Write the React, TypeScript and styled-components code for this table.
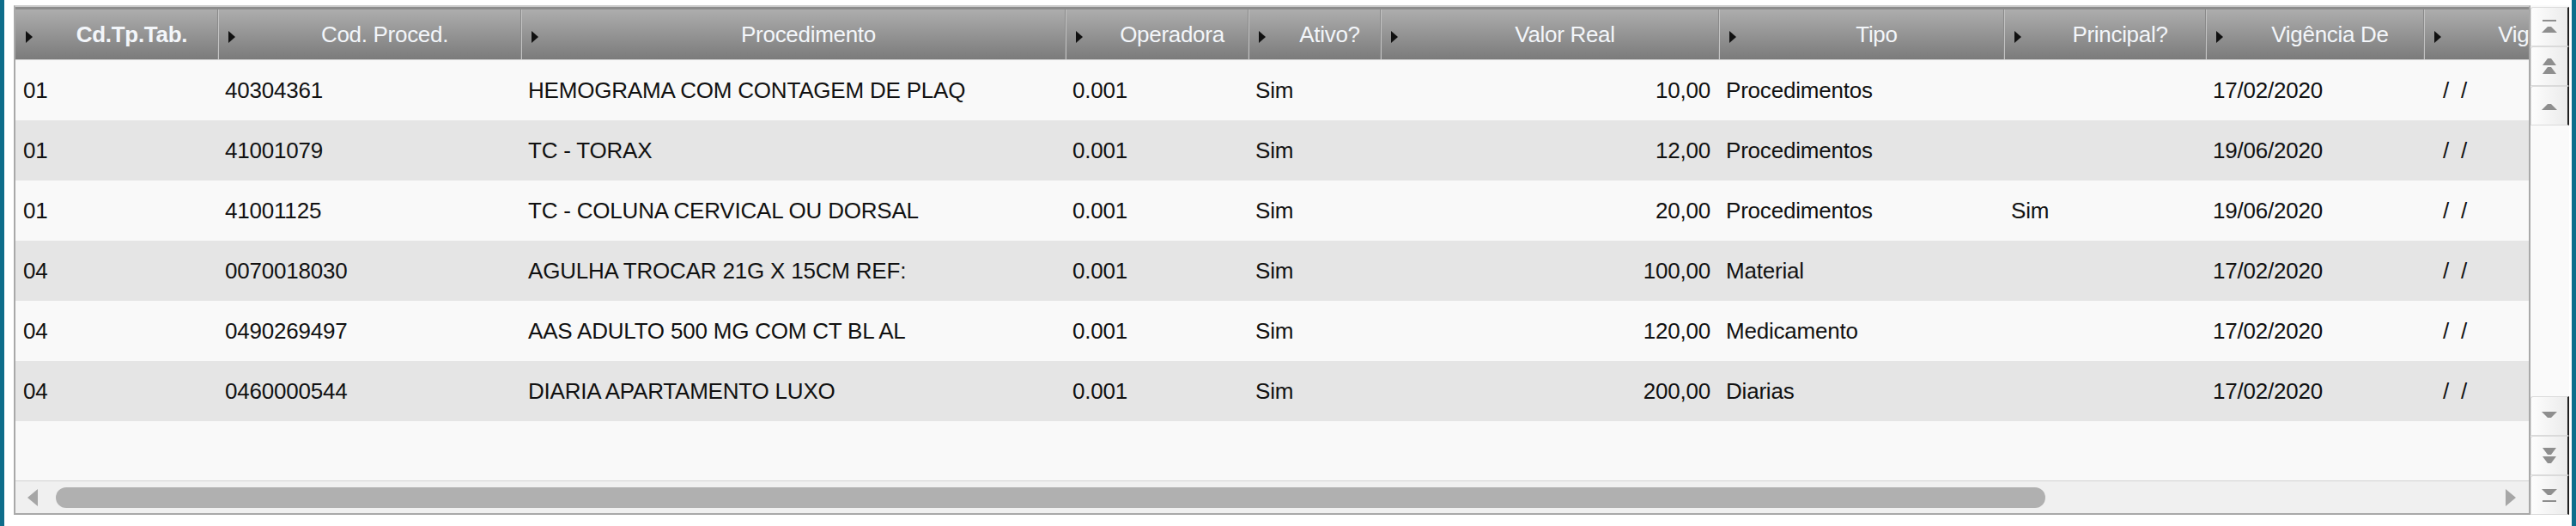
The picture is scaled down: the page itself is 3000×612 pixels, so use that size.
import React from 'react';
import styled, { createGlobalStyle } from 'styled-components';

const TEAL = '#0f6e8b';
const ARROW_GRAY = '#8e8e8e';

const GlobalStyle = createGlobalStyle`
  html, body {
    margin: 0;
    padding: 0;
    background: #ffffff;
  }
  body {
    font-family: 'Liberation Sans', Arial, sans-serif;
  }
`;

const Page = styled.div`
  box-sizing: border-box;
  width: 3000px;
  height: 612px;
  display: flex;
  align-items: flex-start;
  padding: 6px 3px 0 11px;
  border-left: 5px solid ${TEAL};
  border-right: 5px solid ${TEAL};
  background: #ffffff;
`;

const GridFrame = styled.div`
  box-sizing: border-box;
  flex: 1;
  min-width: 0;
  height: 593px;
  display: flex;
  flex-direction: column;
  overflow: hidden;
  border-top: 2px solid #cfcfcf;
  border-left: 2px solid #a9a9a9;
  border-right: 2px solid #a9a9a9;
  border-bottom: 2px solid #a9a9a9;
  background: #f9f9f9;
`;

const HeaderRow = styled.div`
  display: flex;
  flex: none;
  height: 58px;
  border-top: 3px solid #8c8c8c;
  border-bottom: 1px solid #d4d4d4;
  background: linear-gradient(#adadad, #7b7b7b);
`;

const HeaderCell = styled.div<{ $width: number; $first?: boolean }>`
  box-sizing: border-box;
  flex: none;
  width: ${(p) => p.$width}px;
  display: flex;
  align-items: center;
  padding-left: 12px;
  border-left: ${(p) => (p.$first ? 'none' : '1px solid #8a8a8a')};
  box-shadow: ${(p) => (p.$first ? 'none' : 'inset 1px 0 0 #c3c3c3')};
`;

const SortArrow = styled.span`
  flex: none;
  width: 0;
  height: 0;
  margin-top: 5px;
  border-left: 8px solid #111111;
  border-top: 7px solid transparent;
  border-bottom: 7px solid transparent;
`;

const HeaderLabel = styled.span<{ $bold?: boolean }>`
  flex: 1;
  padding-left: 16px;
  text-align: center;
  white-space: nowrap;
  color: #f3f6fa;
  font-size: 26px;
  font-weight: ${(p) => (p.$bold ? 700 : 400)};
  letter-spacing: -0.3px;
`;

const DataRow = styled.div<{ $alt: boolean }>`
  display: flex;
  flex: none;
  height: 70px;
  background: ${(p) => (p.$alt ? '#e5e5e5' : '#f9f9f9')};
`;

const Cell = styled.div<{ $width: number; $align?: 'left' | 'right' }>`
  box-sizing: border-box;
  flex: none;
  width: ${(p) => p.$width}px;
  display: flex;
  align-items: center;
  justify-content: ${(p) => (p.$align === 'right' ? 'flex-end' : 'flex-start')};
  padding: 0 9px;
  white-space: pre;
  color: #111111;
  font-size: 26px;
  letter-spacing: -0.2px;
`;

const EmptySpace = styled.div`
  flex: 1;
  background: #f9f9f9;
`;

const HScroll = styled.div`
  flex: none;
  height: 37px;
  display: flex;
  align-items: center;
  padding: 0 15px 0 14px;
  border-top: 1px solid #d2d2d2;
  background: #f0f0f0;
`;

const HThumb = styled.div`
  flex: none;
  width: 2317px;
  height: 24px;
  margin-left: 21px;
  border-radius: 12px;
  background: #b0b0b0;
`;

const HSpacer = styled.div`
  flex: 1;
`;

const VScroll = styled.div`
  box-sizing: border-box;
  flex: none;
  width: 45px;
  height: 593px;
  display: flex;
  flex-direction: column;
  padding-top: 2px;
  background: #fafafa;
`;

const ButtonGroup = styled.div`
  display: flex;
  flex-direction: column;
`;

const VSpacer = styled.div`
  flex: 1;
`;

const ScrollButton = styled.div`
  box-sizing: border-box;
  height: 46px;
  display: flex;
  align-items: center;
  justify-content: center;
  border: 1px solid #dadada;
  border-right: 2px solid #1f1f1f;
  border-radius: 3px 0 0 0;
  background: linear-gradient(90deg, #fdfdfd, #ebebeb);
`;

type Glyph = 'first' | 'pageUp' | 'up' | 'down' | 'pageDown' | 'last';

const upTri = (y: number, h: number, w = 18) =>
  `${10 - w / 2},${y + h} ${10 + w / 2},${y + h} 12,${y + 1} 8,${y + 1}`;

function ScrollGlyph({ kind }: { kind: Glyph }) {
  const flip = kind === 'down' || kind === 'pageDown' || kind === 'last';
  const base = flip ? ({ first: 'first', pageUp: 'pageUp', up: 'up', down: 'up', pageDown: 'pageUp', last: 'first' } as const)[kind] : kind;
  return (
    <svg width="20" height="30" viewBox="0 0 20 30" style={flip ? { transform: 'scaleY(-1)' } : undefined}>
      {base === 'first' && (
        <>
          <rect x="2" y="7" width="16" height="2" fill={ARROW_GRAY} />
          <polygon points={upTri(14, 8)} fill={ARROW_GRAY} />
        </>
      )}
      {base === 'pageUp' && (
        <>
          <polygon points={upTri(5, 9, 16)} fill={ARROW_GRAY} />
          <polygon points={upTri(15, 9, 16)} fill={ARROW_GRAY} />
        </>
      )}
      {base === 'up' && <polygon points={upTri(12, 8)} fill={ARROW_GRAY} />}
    </svg>
  );
}

function SideArrow({ dir }: { dir: 'left' | 'right' }) {
  return (
    <svg width="12" height="20" viewBox="0 0 12 20">
      <polygon points={dir === 'left' ? '12,0 12,20 0,10' : '0,0 0,20 12,10'} fill="#a6a6a6" />
    </svg>
  );
}

type Column = {
  title: string;
  width: number;
  bold?: boolean;
  align?: 'left' | 'right';
};

const COLUMNS: Column[] = [
  { title: 'Cd.Tp.Tab.', width: 235, bold: true },
  { title: 'Cod. Proced.', width: 353 },
  { title: 'Procedimento', width: 634 },
  { title: 'Operadora', width: 213 },
  { title: 'Ativo?', width: 154 },
  { title: 'Valor Real', width: 394, align: 'right' },
  { title: 'Tipo', width: 332 },
  { title: 'Principal?', width: 235 },
  { title: 'Vigência De', width: 254 },
  { title: 'Vigência Até', width: 278 },
];

const ROWS: string[][] = [
  ['01', '40304361', 'HEMOGRAMA COM CONTAGEM DE PLAQ', '0.001', 'Sim', '10,00', 'Procedimentos', '', '17/02/2020', '  /  /'],
  ['01', '41001079', 'TC - TORAX', '0.001', 'Sim', '12,00', 'Procedimentos', '', '19/06/2020', '  /  /'],
  ['01', '41001125', 'TC - COLUNA CERVICAL OU DORSAL', '0.001', 'Sim', '20,00', 'Procedimentos', 'Sim', '19/06/2020', '  /  /'],
  ['04', '0070018030', 'AGULHA TROCAR 21G X 15CM REF:', '0.001', 'Sim', '100,00', 'Material', '', '17/02/2020', '  /  /'],
  ['04', '0490269497', 'AAS ADULTO 500 MG COM CT BL AL', '0.001', 'Sim', '120,00', 'Medicamento', '', '17/02/2020', '  /  /'],
  ['04', '0460000544', 'DIARIA APARTAMENTO LUXO', '0.001', 'Sim', '200,00', 'Diarias', '', '17/02/2020', '  /  /'],
];

function App() {
  return (
    <>
      <GlobalStyle />
      <Page>
        <GridFrame>
          <HeaderRow>
            {COLUMNS.map((col, i) => (
              <HeaderCell key={col.title} $width={col.width} $first={i === 0}>
                <SortArrow />
                <HeaderLabel $bold={col.bold}>{col.title}</HeaderLabel>
              </HeaderCell>
            ))}
          </HeaderRow>
          {ROWS.map((row, r) => (
            <DataRow key={r} $alt={r % 2 === 1}>
              {row.map((value, c) => (
                <Cell key={c} $width={COLUMNS[c].width} $align={COLUMNS[c].align}>
                  {value}
                </Cell>
              ))}
            </DataRow>
          ))}
          <EmptySpace />
          <HScroll>
            <SideArrow dir="left" />
            <HThumb />
            <HSpacer />
            <SideArrow dir="right" />
          </HScroll>
        </GridFrame>
        <VScroll>
          <ButtonGroup>
            <ScrollButton><ScrollGlyph kind="first" /></ScrollButton>
            <ScrollButton><ScrollGlyph kind="pageUp" /></ScrollButton>
            <ScrollButton><ScrollGlyph kind="up" /></ScrollButton>
          </ButtonGroup>
          <VSpacer />
          <ButtonGroup>
            <ScrollButton><ScrollGlyph kind="down" /></ScrollButton>
            <ScrollButton><ScrollGlyph kind="pageDown" /></ScrollButton>
            <ScrollButton><ScrollGlyph kind="last" /></ScrollButton>
          </ButtonGroup>
        </VScroll>
      </Page>
    </>
  );
}

export default App;
